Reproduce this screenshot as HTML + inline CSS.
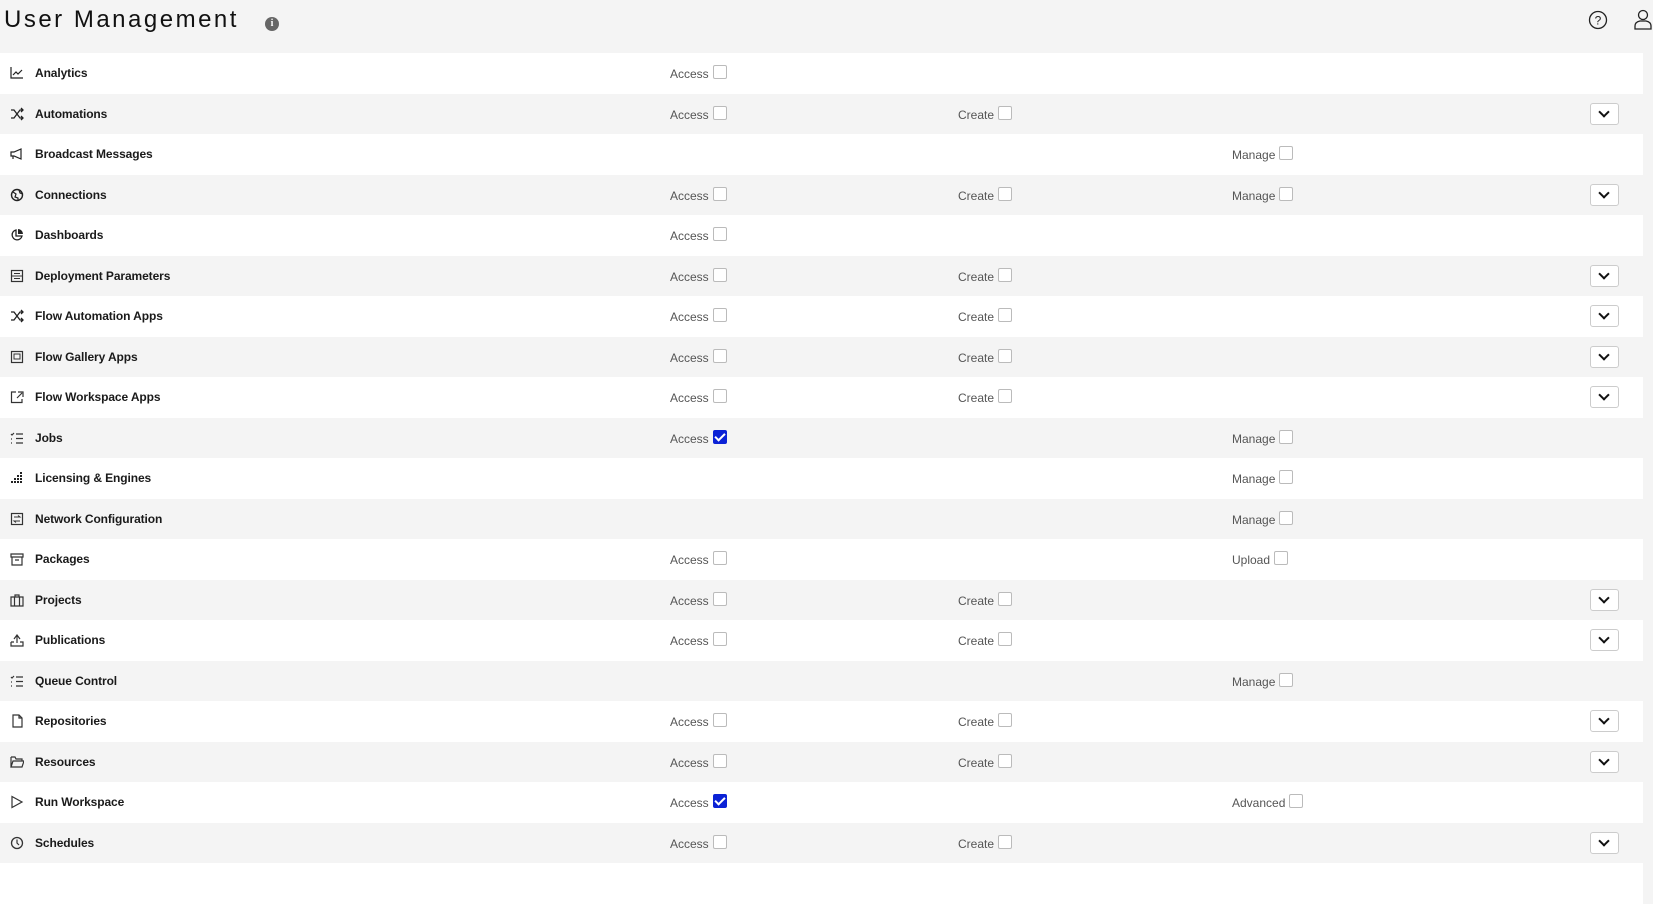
<!DOCTYPE html>
<html><head><style>
body{margin:0;width:1653px;height:871px;background:#f4f4f4;font-family:"Liberation Sans",Arial,sans-serif;overflow:hidden;position:relative}
.title{position:absolute;left:4px;top:6px;font-size:24px;letter-spacing:2.5px;color:#111}
.info{position:absolute;left:265px;top:17px;width:14px;height:14px;border-radius:50%;background:#666;color:#fff;font-size:10px;font-weight:bold;text-align:center;line-height:14px;font-family:"Liberation Serif",serif}
.row{position:absolute;left:0;width:1643px;height:40.5px}
.w{background:#fff}.g{background:#f4f4f4}
.ic{position:absolute;left:10px;top:13px;width:14px;height:14px}
.nm{position:absolute;left:35px;top:13px;font-size:12px;font-weight:bold;color:#1a1a1a;letter-spacing:-0.1px}
.lb{position:absolute;top:12px;font-size:12px;color:#555;white-space:nowrap}
.cb{display:inline-block;width:12px;height:12px;border:1px solid #bbb;border-radius:2px;background:#fff;vertical-align:-1px;margin-left:4px}
.ck{background:#0b22d6;border-color:#0b22d6;position:relative}
.ck:after{content:"";position:absolute;left:3px;top:0px;width:4px;height:8px;border:solid #fff;border-width:0 2px 2px 0;transform:rotate(45deg)}
.dd{position:absolute;left:1590px;top:9px;width:27px;height:20px;border:1px solid #ccc;border-radius:3px;background:#fff}
.dd:after{content:"";position:absolute;left:9px;top:4px;width:6px;height:6px;border:solid #111;border-width:0 2px 2px 0;transform:rotate(45deg)}
</style></head><body>
<div class="title">User Management</div>
<div class="info">i</div>
<svg style="position:absolute;left:1588px;top:10px" width="20" height="20" viewBox="0 0 20 20"><circle cx="10" cy="10" r="8.5" fill="none" stroke="#222" stroke-width="1.3"/><text x="10" y="14.5" font-size="12" text-anchor="middle" font-family="Liberation Sans" fill="#222">?</text></svg>
<svg style="position:absolute;left:1633px;top:9px" width="20" height="22" viewBox="0 0 20 22"><circle cx="10" cy="6" r="4.5" fill="none" stroke="#222" stroke-width="1.3"/><path d="M2 20v-3q0-4 5-5h6q5 1 5 5v3z" fill="none" stroke="#222" stroke-width="1.3"/></svg>
<div id="rows"></div>
<script>
var I={
an:'<path d="M1 1v11h12M3 9l3-3 2 2 4-4" fill="none" stroke="#222" stroke-width="1.2"/>',
sh:'<path d="M1 3h3l6 8h3M1 11h3l6-8h3M11 1l2 2-2 2M11 9l2 2-2 2" fill="none" stroke="#222" stroke-width="1.3"/>',
mg:'<path d="M1 5h3l7-3v10l-7-3H1zM3 9v3" fill="none" stroke="#222" stroke-width="1.2"/>',
gl:'<circle cx="7" cy="7" r="5.5" fill="none" stroke="#222" stroke-width="1.4"/><path d="M3 4l3 2-1 3 3 1v3M9 2l1 3 3 1" fill="none" stroke="#222" stroke-width="1.2"/>',
pi:'<path d="M6 2a5 5 0 1 0 6 6H6z" fill="none" stroke="#222" stroke-width="1.3"/><path d="M8 1v5h5a5 5 0 0 0-5-5z" fill="#222"/>',
dp:'<rect x="1.5" y="1.5" width="11" height="11" fill="none" stroke="#333" stroke-width="1.2"/><path d="M1.5 7h11M4 4.5h6M4 9.5h6" stroke="#333"/>',
ga:'<rect x="1.5" y="1.5" width="11" height="11" fill="none" stroke="#333" stroke-width="1.2"/><rect x="4" y="4" width="6" height="5" fill="none" stroke="#333"/>',
ws:'<path d="M6 2H1.5v10.5h10.5V9M7 8l5-5M8 2h5v5" fill="none" stroke="#333" stroke-width="1.2"/>',
li:'<path d="M1 3l1 1 2-2M1 8h1M1 12h1M6 3h7M6 7.5h7M6 12h7" fill="none" stroke="#333" stroke-width="1.2"/>',
ba:'<path d="M10 1h2v2h-2zM7 4h2v2H7zM10 4h2v2h-2zM4 7h2v2H4zM7 7h2v2H7zM10 7h2v2h-2zM1 10h2v2H1zM4 10h2v2H4zM7 10h2v2H7zM10 10h2v2h-2z" fill="#222"/>',
nc:'<rect x="1.5" y="1.5" width="11" height="11" fill="none" stroke="#333" stroke-width="1.2"/><path d="M4 5h6l-2-1.5M10 9H4l2 1.5" fill="none" stroke="#333"/>',
pk:'<path d="M1 2h12v3H1zM2 5v8h10V5M5 8h4" fill="none" stroke="#333" stroke-width="1.2"/>',
pr:'<path d="M1 4h12v9H1zM5 4V2h4v2M4.5 4v9M9.5 4v9" fill="none" stroke="#333" stroke-width="1.2"/>',
pu:'<path d="M1 9v4h12V9h-3M4 9H1M7 10V3M4 6l3-4 3 4" fill="none" stroke="#333" stroke-width="1.2"/>',
re:'<path d="M3 1h6l3 3v9H3zM9 1v3h3" fill="none" stroke="#333" stroke-width="1.2"/>',
fo:'<path d="M1 2h4l1 2h6v2M1 12V2M1 12l2-6h11l-2 6z" fill="none" stroke="#333" stroke-width="1.2"/>',
pl:'<path d="M2 1.5l10 5.5-10 5.5z" fill="none" stroke="#333" stroke-width="1.2"/>',
cl:'<circle cx="7" cy="7" r="5.5" fill="none" stroke="#333" stroke-width="1.3"/><path d="M7 3.5V7l2 2" fill="none" stroke="#333" stroke-width="1.2"/>'};
var R=[["Analytics",1,0,0,0,"an"],["Automations",1,1,0,1,"sh"],["Broadcast Messages",0,0,"Manage",0,"mg"],["Connections",1,1,"Manage",1,"gl"],["Dashboards",1,0,0,0,"pi"],["Deployment Parameters",1,1,0,1,"dp"],["Flow Automation Apps",1,1,0,1,"sh"],["Flow Gallery Apps",1,1,0,1,"ga"],["Flow Workspace Apps",1,1,0,1,"ws"],["Jobs",2,0,"Manage",0,"li"],["Licensing & Engines",0,0,"Manage",0,"ba"],["Network Configuration",0,0,"Manage",0,"nc"],["Packages",1,0,"Upload",0,"pk"],["Projects",1,1,0,1,"pr"],["Publications",1,1,0,1,"pu"],["Queue Control",0,0,"Manage",0,"li"],["Repositories",1,1,0,1,"re"],["Resources",1,1,0,1,"fo"],["Run Workspace",2,0,"Advanced",0,"pl"],["Schedules",1,1,0,1,"cl"],["",0,0,0,0]];
var h="";
R.forEach(function(r,i){
h+='<div class="row '+(i%2?'g':'w')+'" style="top:'+(53+i*40.5)+'px">';
if(r[0]){h+='<svg class="ic" viewBox="0 0 14 14">'+I[r[5]]+'</svg>';
h+='<div class="nm">'+r[0].replace("&","&amp;")+'</div>';}
if(r[1])h+='<div class="lb" style="left:670px">Access<span class="cb'+(r[1]==2?' ck':'')+'"></span></div>';
if(r[2])h+='<div class="lb" style="left:958px">Create<span class="cb"></span></div>';
if(r[3])h+='<div class="lb" style="left:1232px">'+r[3]+'<span class="cb"></span></div>';
if(r[4])h+='<div class="dd"></div>';
h+='</div>';});
document.getElementById("rows").innerHTML=h;
</script>
</body></html>
